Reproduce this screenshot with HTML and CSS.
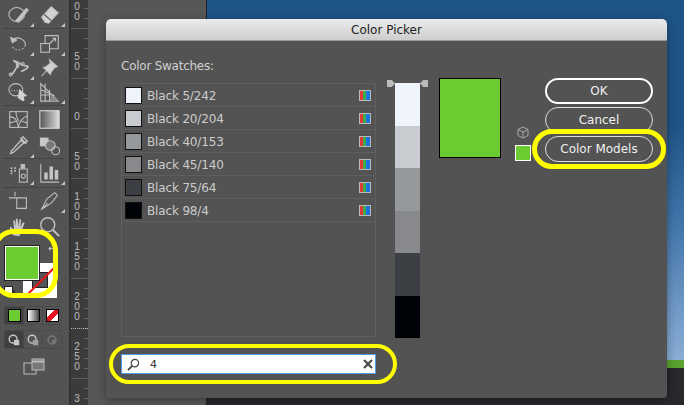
FILE: index.html
```html
<!DOCTYPE html>
<html lang="en">
<head>
    <meta charset="UTF-8">
    <title>Color Picker</title>
    <link rel="stylesheet" href="styles.css">
</head>
<body>

<div class="app">
    <!-- Tool panel -->
    <aside class="toolbar">
        <div class="tool-group g1">
            <span class="tool more"><svg viewBox="0 0 24 24"><ellipse cx="10" cy="12" rx="9" ry="8"/><path d="M9 19 21 5l2 2-11 14z" fill="#c4c4c4"/></svg></span>
            <span class="tool more"><svg viewBox="0 0 24 24"><path d="M3 15 14 3l8 7-11 12-4-1z" fill="#d2d2d2"/><path d="M6 12l8 7" stroke="#535353"/></svg></span>
        </div>
        <div class="tool-group g2">
            <span class="tool more"><svg viewBox="0 0 24 24"><path d="M5 8a9 9 0 0 1 15 6" /><path d="M3 5l2 6 5-3z" fill="#bdbdbd"/><path d="M20 14a9 9 0 0 1-16 1" stroke-dasharray="2 2"/></svg></span>
            <span class="tool more"><svg viewBox="0 0 24 24"><rect x="2" y="12" width="10" height="10"/><path d="M7 12V3h15v15h-10M12 12l7-6M15 6h4v4"/></svg></span>
            <span class="tool more"><svg viewBox="0 0 24 24"><path d="M3 20c4 0 4-5 7-8S8 5 6 4c3 1 7 3 10 5s6 0 7 2c-2 5-6 3-8 6" stroke-width="2"/><circle cx="3" cy="20" r="1.6"/><circle cx="11" cy="10" r="1.6"/><circle cx="17" cy="8" r="1.6"/></svg></span>
            <span class="tool"><svg viewBox="0 0 24 24"><path d="M12 3 21 11l-3 1-4 5-1 3-8-8 3-1 5-4zM8 16l-5 6" fill="#d2d2d2"/></svg></span>
            <span class="tool more"><svg viewBox="0 0 24 24"><ellipse cx="9" cy="10" rx="8" ry="7"/><path d="M4 11h10" stroke-dasharray="1 2"/><path d="M13 9l9 8-4 1 1 4-2 1-6-4z" fill="#d2d2d2" stroke="none"/></svg></span>
            <span class="tool more"><svg viewBox="0 0 24 24"><path d="M2 3v20h20L2 3zM7 3v20M12 10v13M17 16v7M2 10l14 6M2 16h15"/><path d="M13 14l9 9h-9z" fill="#8a8a8a" stroke="none"/></svg></span>
        </div>
        <div class="tool-group g3">
            <span class="tool"><svg viewBox="0 0 24 24"><rect x="2" y="3" width="20" height="18"/><path d="M2 9c6 0 8 3 10 12M12 21c1-6 4-11 10-13M9 3c0 5 2 9 3 11M2 16l7-2M16 14l6 2"/></svg></span>
            <span class="tool"><svg viewBox="0 0 24 24"><defs><linearGradient id="grad"><stop offset="0" stop-color="#555"/><stop offset="1" stop-color="#ddd"/></linearGradient></defs><rect x="1" y="2" width="22" height="20" fill="url(#grad)" stroke="#ddd"/></svg></span>
            <span class="tool more"><svg viewBox="0 0 24 24"><path d="M15 6 4 18l-1 3 3-1L18 9zM14 3l7 7M17 2l5 5-3 2-4-4z" stroke-width="1.6"/></svg></span>
            <span class="tool"><svg viewBox="0 0 24 24"><rect x="1" y="3" width="10" height="10" fill="#c8c8c8" stroke="none"/><circle cx="13" cy="12" r="5.500" fill="#777"/><circle cx="19" cy="18" r="4.500"/></svg></span>
        </div>
        <div class="tool-group g4">
            <span class="tool more"><svg viewBox="0 0 24 24"><path d="M3 7h2M7 7h2M3 10h2M7 10h2M3 13h2" stroke-width="2"/><rect x="13" y="8" width="9" height="15"/><rect x="15" y="3" width="4" height="4" fill="#bdbdbd"/><circle cx="17.500" cy="16" r="2.400"/></svg></span>
            <span class="tool more"><svg viewBox="0 0 24 24"><path d="M2 2v21h21"/><path d="M6 20v-8h4v8zM12 20V5h4v15zM18 20V9h4v11z" fill="#c4c4c4" stroke="none"/></svg></span>
        </div>
        <div class="tool-group g5">
            <span class="tool"><svg viewBox="0 0 24 24"><path d="M1 9h14M8 2v5M10 9h11v12H10z"/></svg></span>
            <span class="tool more"><svg viewBox="0 0 24 24"><path d="M3 22 9 10 18 3l3 3-7 9zM3 22l7-7"/></svg></span>
            <span class="tool"><svg viewBox="0 0 24 24"><path d="M6 22 2 13l1-1 4 4-1-11 2 0 1 7V3h2l1 9 1-8h2l-1 9 3-6 2 1-4 10-2 5z" fill="#c8c8c8" stroke="none"/></svg></span>
            <span class="tool"><svg viewBox="0 0 24 24"><circle cx="10" cy="10" r="8" stroke-width="1.6"/><path d="M16 16l7 7" stroke-width="2.400"/></svg></span>
        </div>

        <div class="color-well">
            <span class="well-stroke"><i></i></span>
            <span class="well-fill"></span>
            <span class="well-default"></span>
            <span class="well-swap">↔</span>
        </div>

        <div class="mode-row first">
            <span class="mode-cell on"><i class="chip chip-color"></i></span>
            <span class="mode-cell"><i class="chip chip-gradient"></i></span>
            <span class="mode-cell"><i class="chip chip-none"></i></span>
        </div>
        <div class="mode-row">
            <span class="mode-cell on"><svg viewBox="0 0 16 16"><circle cx="7" cy="7" r="4.500" stroke-width="1.600"/><rect x="8" y="8" width="6" height="6" fill="#c8c8c8" stroke="none"/></svg></span>
            <span class="mode-cell"><svg viewBox="0 0 16 16"><circle cx="7" cy="7" r="4.500" stroke-width="1.600"/><rect x="8" y="8" width="6" height="6" fill="#a0a0a0" stroke="none"/></svg></span>
            <span class="mode-cell"><svg viewBox="0 0 16 16"><circle cx="8" cy="8" r="4.500" stroke="#777" stroke-width="1.600"/><path d="M8 8h4v4H8z" fill="#777" stroke="none"/></svg></span>
        </div>
        <svg class="screen-mode" viewBox="0 0 22 17"><rect x="1" y="5" width="12" height="11" fill="#535353"/><rect x="9" y="1" width="12" height="11" fill="#777"/><path d="M9 3.500h12" stroke-width="2"/></svg>
    </aside>

    <!-- Vertical ruler -->
    <div class="ruler">
        <div class="ruler-inner">
            <div class="ruler-seg"><span>1</span><span>0</span><span>0</span></div>
            <div class="ruler-seg"><span>5</span><span>0</span></div>
            <div class="ruler-seg"><span>0</span></div>
            <div class="ruler-seg"><span>5</span><span>0</span></div>
            <div class="ruler-seg"><span>1</span><span>0</span><span>0</span></div>
            <div class="ruler-seg"><span>1</span><span>5</span><span>0</span></div>
            <div class="ruler-seg cursor"><span>2</span><span>0</span><span>0</span></div>
            <div class="ruler-seg"><span>2</span><span>5</span><span>0</span></div>
            <div class="ruler-seg last"><span>3</span></div>
        </div>
    </div>

    <main class="workspace">
        <div class="pasteboard"></div>
        <div class="artboard">
            <div class="sky"></div>
            <div class="grass"></div>
            <div class="ground"></div>
        </div>
    </main>
</div>

<!-- Color Picker dialog -->
<section class="dialog">
    <header class="dialog-title">Color Picker</header>
    <div class="dialog-body">
        <div class="swatch-col">
            <div class="swatch-heading">Color Swatches:</div>
            <ul class="swatch-list">
                <li><i class="sw s1"></i><span>Black 5/242</span><b class="rgb"></b></li>
                <li><i class="sw s2"></i><span>Black 20/204</span><b class="rgb"></b></li>
                <li><i class="sw s3"></i><span>Black 40/153</span><b class="rgb"></b></li>
                <li><i class="sw s4"></i><span>Black 45/140</span><b class="rgb"></b></li>
                <li><i class="sw s5"></i><span>Black 75/64</span><b class="rgb"></b></li>
                <li><i class="sw s6"></i><span>Black 98/4</span><b class="rgb"></b></li>
            </ul>
            <div class="search">
                <svg class="search-icon" viewBox="0 0 14 14"><circle cx="8.500" cy="5.500" r="4"/><path d="M5.500 8.500 1 13" stroke-width="2"/></svg>
                <span class="search-text">4</span>
                <svg class="search-clear" viewBox="0 0 10 10"><path d="M1 1l8 8M9 1 1 9"/></svg>
            </div>
        </div>

        <div class="ramp">
            <i class="ramp-handle left"></i>
            <i class="ramp-handle right"></i>
            <i class="s1"></i><i class="s2"></i><i class="s3"></i><i class="s4"></i><i class="s5"></i><i class="s6"></i>
        </div>

        <div class="preview"></div>

        <div class="gamut">
            <svg class="cube" viewBox="0 0 12 13"><path d="M6 1 11 3.500v6L6 12 1 9.500v-6zM1 3.500 6 6l5-2.500M6 6v6"/></svg>
            <span class="web-chip"></span>
        </div>

        <div class="buttons">
            <button class="btn primary">OK</button>
            <button class="btn">Cancel</button>
            <button class="btn">Color Models</button>
        </div>
    </div>
</section>

<!-- Yellow highlight marks -->
<div class="mark mark-well"></div>
<div class="mark mark-search"></div>
<div class="mark mark-models"></div>

</body>
</html>
```

FILE: styles.css
```css
* { box-sizing: border-box; }
html, body { margin: 0; height: 100%; overflow: hidden; }
body { font-family: "DejaVu Sans", sans-serif; font-size: 12px; color: #ccc; background: #535353; }

.app { display: flex; height: 405px; }

/* tools */
.toolbar { width: 71px; flex: none; background: #535353; border-right: 2px solid #333; padding: 0 0 0 3px; }
.tool-group { display: grid; grid-template-columns: 31px 31px; grid-auto-rows: 24px; width: 61px; border-bottom: 1px solid #444; justify-items: center; align-items: center; }
.g1 { height: 29px; padding-top: 2px; }
.g2 { height: 77px; padding-top: 2px; }
.g3 { height: 53px; padding-top: 1px; row-gap: 2px; }
.g4 { height: 29px; padding-top: 1px; }
.g5 { border-bottom: none; height: 57px; row-gap: 2px; }
.tool { position: relative; width: 26px; height: 24px; display: flex; align-items: center; justify-content: center; }
.tool svg { width: 21px; height: 21px; fill: none; stroke: #c0c0c0; stroke-width: 1.2; }
.more::after { content: ""; position: absolute; right: -2px; bottom: -1px; border-left: 4px solid transparent; border-bottom: 4px solid #c4c4c4; }

.color-well { position: relative; height: 53px; margin-left: -3px; }
.well-fill { position: absolute; left: 5px; top: 1px; width: 34px; height: 34px; background: #6acc30; border: 1px solid #fff; outline: 1px solid #222; }
.well-stroke { position: absolute; left: 23px; top: 18px; width: 34px; height: 35px; background: #fff; overflow: hidden; }
.well-stroke i { position: absolute; left: 9px; top: 9px; width: 16px; height: 16px; background: #535353; border: 1px solid #222; }
.well-stroke::after { content: ""; position: absolute; left: -8px; top: 17px; width: 52px; height: 2px; background: #e8141c; transform: rotate(-45deg); }
.well-default { position: absolute; left: 5px; top: 42px; width: 7px; height: 7px; background: #fff; outline: 1px solid #222; box-shadow: 3px 3px 0 0 #333; }
.well-swap { position: absolute; left: 48px; top: -2px; font-size: 10px; color: #ccc; line-height: 12px; }

.mode-row { display: flex; width: 58px; height: 19px; margin: 5px 0 0 1px; border: 1px solid #4a4a4a; border-radius: 2px; }
.mode-row.first { margin-top: 8px; }
.mode-cell { flex: 1; display: flex; align-items: center; justify-content: center; border-right: 1px solid #4a4a4a; }
.mode-cell:last-child { border-right: none; }
.mode-cell.on { background: #3f3f3f; }
.mode-cell svg { width: 14px; height: 14px; fill: none; stroke: #c8c8c8; }
.chip { display: block; width: 13px; height: 13px; border: 1px solid #000; }
.chip-color { background: #6acc30; }
.chip-gradient { background: linear-gradient(to right, #fff, #444); }
.chip-none { background: linear-gradient(135deg, #fff 36%, #e8141c 36%, #e8141c 64%, #fff 64%); }
.screen-mode { display: block; width: 22px; height: 17px; margin: 9px 0 0 20px; fill: none; stroke: #bdbdbd; }

/* ruler */
.ruler { width: 17px; flex: none; overflow: hidden; background-color: #3b3b3b; background-image: repeating-linear-gradient(to bottom, #666 0 1px, transparent 1px 10px); background-size: 4px 100%; background-position: right -2px; background-repeat: no-repeat; }
.ruler-inner { margin-top: -21px; }
.ruler-seg { height: 50px; border-bottom: 1px solid #5e5e5e; display: flex; flex-direction: column; justify-content: flex-end; padding: 0 0 6px 2px; font-size: 10px; line-height: 10px; color: #bcbcbc; font-family: "Liberation Sans", sans-serif; }
.ruler-seg span { display: block; width: 8px; text-align: center; }
.ruler-seg.cursor { border-bottom: 1px dotted #bbb; }
.ruler-seg.last { justify-content: flex-start; padding: 15px 0 0 2px; border-bottom: none; }

/* behind the dialog */
.workspace { flex: 1; display: flex; }
.pasteboard { width: 119px; background: #575757; border-right: 1px solid #222; }
.artboard { flex: 1; display: flex; flex-direction: column; }
.sky { height: 360px; background: linear-gradient(to bottom, #1f5487 0%, #1f5487 35%, #3f72a8 60%, #8aaed5 100%); }
.grass { height: 8px; background: #5aa32e; }
.ground { flex: 1; background: #26282c; }

/* dialog */
.dialog { position: absolute; left: 106px; top: 19px; width: 561px; height: 379px; background: #535353; border-radius: 5px 5px 4px 4px; box-shadow: 0 2px 10px rgba(0,0,0,.35); overflow: hidden; }
.dialog-title { height: 22px; line-height: 23px; text-align: center; color: #222; background: linear-gradient(to bottom, #ececec, #cdcdcd); border-bottom: 1px solid #9a9a9a; }
.dialog-body { display: flex; align-items: flex-start; padding: 0 0 0 15px; }

.swatch-col { width: 255px; flex: none; }
.swatch-heading { height: 42px; padding-top: 18px; line-height: 14px; color: #d0d0d0; letter-spacing: -0.25px; }
.swatch-list { list-style: none; margin: 0; padding: 0; height: 254px; border: 1px solid #606060; border-radius: 2px; }
.swatch-list li { display: flex; align-items: center; height: 23px; padding: 0 4px 0 3px; border-bottom: 1px solid #5e5e5e; color: #ccc; }
.sw { width: 17px; height: 17px; border: 1px solid #111; margin-right: 5px; }
.swatch-list span { flex: 1; letter-spacing: -0.15px; padding-top: 2px; }
.rgb { width: 12px; height: 11px; border: 1px solid #bbb; background: linear-gradient(to right, #e23a35 34%, #3cae49 34%, #3cae49 55%, #1c73e0 55%); }
.s1 { background-color: #eff3fb; }
.s2 { background-color: #c8cbd0; }
.s3 { background-color: #96999c; }
.s4 { background-color: #88898d; }
.s5 { background-color: #3c3f43; }
.s6 { background-color: #000308; }

.search { display: flex; align-items: center; height: 20px; margin-top: 17px; background: #fff; border: 1px solid #4a9be8; padding: 0 2px 0 5px; color: #333; }
.search-icon { width: 13px; height: 13px; fill: none; stroke: #444; stroke-width: 1.3; }
.search-text { flex: 1; margin-left: 10px; font-size: 11px; }
.search-clear { width: 10px; height: 10px; fill: none; stroke: #444; stroke-width: 2; }

.ramp { position: relative; width: 25px; height: 255px; margin: 42px 0 0 19px; display: flex; flex-direction: column; flex: none; }
.ramp > i:not(.ramp-handle) { display: block; flex: 1; }
.ramp-handle { position: absolute; top: -3px; width: 8px; height: 7px; background: #bbb; }
.ramp-handle.left { left: -8px; clip-path: polygon(0 0, 60% 0, 100% 50%, 60% 100%, 0 100%); }
.ramp-handle.right { right: -8px; clip-path: polygon(40% 0, 100% 0, 100% 100%, 40% 100%, 0 50%); }

.preview { width: 62px; height: 80px; margin: 37px 0 0 19px; flex: none; background: #6acc30; border: 1px solid #000; }

.gamut { display: flex; flex-direction: column; align-items: center; width: 16px; margin: 85px 0 0 14px; flex: none; gap: 6px; }
.cube { width: 12px; height: 13px; fill: none; stroke: #aaa; }
.web-chip { display: block; width: 16px; height: 16px; background: #6acc30; border: 1px solid #fff; }

.buttons { display: flex; flex-direction: column; gap: 3px; width: 108px; margin: 37px 0 0 14px; flex: none; }
.btn { height: 26px; padding: 0; font: 12px "DejaVu Sans", sans-serif; color: #f0f0f0; background: transparent; border: 1px solid #ddd; border-radius: 13px; }
.btn.primary { border: 2px solid #fff; }

/* annotations on top of the screenshot */
.mark { position: absolute; border: 5px solid #ffff00; }
.mark-well { left: -8px; top: 229px; width: 66px; height: 69px; border-radius: 22px; }
.mark-search { left: 109px; top: 344px; width: 288px; height: 40px; border-radius: 20px; border-width: 4px; }
.mark-models { left: 532px; top: 129px; width: 134px; height: 40px; border-radius: 20px; }
```
